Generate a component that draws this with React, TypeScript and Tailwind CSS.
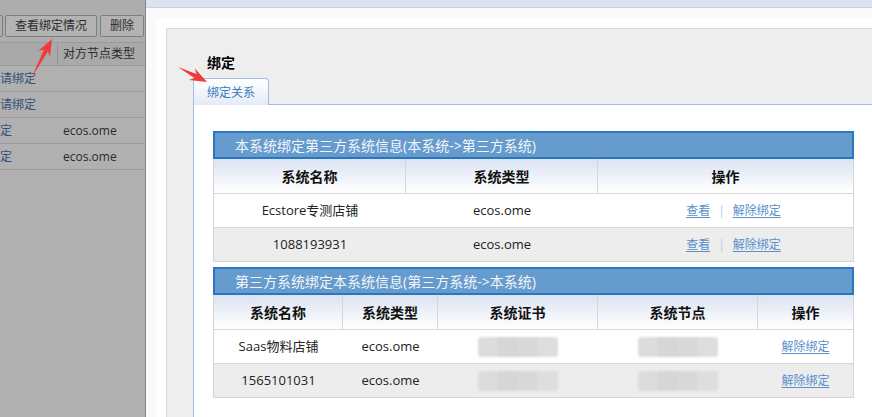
import React from "react";

type Row = { cells: React.ReactNode[] };

const font = "font-['Open_Sans','Noto_Sans_CJK_SC',sans-serif]";

function Blur() {
  return (
    <div className="mx-auto flex h-[20px] w-[80px] overflow-hidden rounded-[3px] blur-[1px]">
      <div className="flex-1 bg-[#dcdcdc]" />
      <div className="flex-1 bg-[#d6d6d6]" />
      <div className="flex-1 bg-[#d9d9d9]" />
      <div className="flex-1 bg-[#dedede]" />
    </div>
  );
}

function Link({ children }: { children: React.ReactNode }) {
  return (
    <span className="cursor-pointer text-[12px] text-[#5b8fca] underline underline-offset-2">{children}</span>
  );
}

function InfoTable({
  title,
  cols,
  headers,
  rows,
}: {
  title: string;
  cols: string;
  headers: string[];
  rows: Row[];
}) {
  return (
    <div className="w-[641px]">
      <div className="flex h-[28px] items-center border-2 border-[#2b76c3] bg-[#659bcd] pl-[20px] text-[14px] text-[#f2f6fb]">
        {title}
      </div>
      <div
        className={`grid ${cols} h-[35px] border-x border-b border-[#d6d6d6] bg-gradient-to-b from-[#dbe3f1] to-white`}
      >
        {headers.map((h, i) => (
          <div
            key={h}
            className={`flex items-center justify-center text-[14px] font-bold text-[#111] ${
              i < headers.length - 1 ? "border-r border-[#d6d6d6]" : ""
            }`}
          >
            {h}
          </div>
        ))}
      </div>
      {rows.map((r, ri) => (
        <div
          key={ri}
          className={`grid ${cols} h-[34px] border-x border-b border-[#d6d6d6] ${
            ri % 2 === 1 ? "bg-[#ededed]" : "bg-white"
          }`}
        >
          {r.cells.map((c, ci) => (
            <div key={ci} className="flex items-center justify-center text-[13px] text-[#222]">
              {c}
            </div>
          ))}
        </div>
      ))}
    </div>
  );
}

function Actions() {
  return (
    <div className="flex items-center gap-[8px] pl-[16px]">
      <Link>查看</Link>
      <span className="text-[12px] text-[#b5c8de]">|</span>
      <Link>解除绑定</Link>
    </div>
  );
}

function LeftPanel() {
  const rows = [
    { a: "请绑定", b: "" },
    { a: "请绑定", b: "" },
    { a: "定", b: "ecos.ome" },
    { a: "定", b: "ecos.ome" },
  ];
  return (
    <div className="flex h-full w-[146px] shrink-0 flex-col border-r border-[#7c8794] bg-[#b0b0b0]">
      <div className="flex h-[42px] items-start gap-[2px] bg-[#adadad] pt-[15px]">
        <div className="h-[22px] w-[3px] rounded-r-[2px] border-y border-r border-[#7e7e7e]" />
        <div className="flex h-[22px] w-[92px] items-center justify-center rounded-[2px] border border-[#7e7e7e] bg-[#b3b3b3] text-[12px] text-[#2c2c2c]">
          查看绑定情况
        </div>
        <div className="ml-[1px] flex h-[22px] w-[44px] items-center justify-center rounded-[2px] border border-[#7e7e7e] bg-[#b3b3b3] text-[12px] text-[#2c2c2c]">
          删除
        </div>
      </div>
      <div className="flex h-[24px] border-y border-[#9a9a9a] bg-[#a9a9a9] text-[12px] text-[#2c2c2c]">
        <div className="w-[58px] border-r border-[#959595]" />
        <div className="flex items-center pl-[5px]">对方节点类型</div>
      </div>
      {rows.map((r, i) => (
        <div key={i} className="flex h-[26px] items-center border-b border-[#9c9c9c] text-[12px]">
          <div className="w-[63px] overflow-hidden whitespace-nowrap text-right">
            <span className="inline-block w-[63px] text-left text-[#34507a]">{r.a}</span>
          </div>
          <div className="text-[#2b2b2b]">{r.b}</div>
        </div>
      ))}
    </div>
  );
}

export default function App() {
  const cols1 = "grid-cols-[192px_192px_255px]";
  const cols2 = "grid-cols-[129px_95px_160px_160px_95px]";
  return (
    <div className={`relative flex h-[417px] w-[872px] overflow-hidden bg-white ${font}`}>
      <LeftPanel />
      <div className="flex min-w-0 flex-1 flex-col">
        <div className="h-[8px] shrink-0 border-b border-[#c7d0dd] bg-[#dce3ee]" />
        <div className="flex flex-1 flex-col bg-[#fafafa] pl-[10px] pt-[10px]">
          <div className="flex flex-1 flex-col bg-white pl-[10px] pt-[10px]">
            <div className="flex flex-1 flex-col border-l border-t border-[#d6d6d6] bg-[#eeeeee] pl-[26px] pt-[24px]">
              <div className="h-[20px] pl-[14px] text-[14px] font-bold leading-[20px] text-black">绑定</div>
              <div className="mt-[5px] flex h-[27px]">
                <div className="flex w-[76px] items-center rounded-t-[4px] border-x border-t border-[#a4bde3] bg-gradient-to-b from-white to-[#e4ebf7] pl-[13px] pt-[2px] text-[12px] text-[#3c7ab8]">
                  绑定关系
                </div>
                <div className="flex-1 border-b border-[#a4bde3]" />
              </div>
              <div className="flex flex-1 flex-col gap-[5px] border-l border-[#a4bde3] bg-white pl-[19px] pt-[26px]">
                <InfoTable
                  title="本系统绑定第三方系统信息(本系统->第三方系统)"
                  cols={cols1}
                  headers={["系统名称", "系统类型", "操作"]}
                  rows={[
                    { cells: ["Ecstore专测店铺", "ecos.ome", <Actions key="a" />] },
                    { cells: ["1088193931", "ecos.ome", <Actions key="a" />] },
                  ]}
                />
                <InfoTable
                  title="第三方系统绑定本系统信息(第三方系统->本系统)"
                  cols={cols2}
                  headers={["系统名称", "系统类型", "系统证书", "系统节点", "操作"]}
                  rows={[
                    {
                      cells: [
                        "Saas物料店铺",
                        "ecos.ome",
                        <Blur key="b1" />,
                        <Blur key="b2" />,
                        <Link key="l">解除绑定</Link>,
                      ],
                    },
                    {
                      cells: [
                        "1565101031",
                        "ecos.ome",
                        <Blur key="b1" />,
                        <Blur key="b2" />,
                        <Link key="l">解除绑定</Link>,
                      ],
                    },
                  ]}
                />
              </div>
            </div>
          </div>
        </div>
      </div>
      <svg className="pointer-events-none absolute inset-0" width="872" height="417">
        <polygon
          fill="#f23a3a"
          points="32,77 47.9,51.5 49.9,57 52,39 38.3,51 43.9,49.5"
        />
        <polygon
          fill="#f23a3a"
          points="178,67 194.4,78 188.9,80 207,82 194.9,68.4 196.4,74"
        />
      </svg>
    </div>
  );
}
